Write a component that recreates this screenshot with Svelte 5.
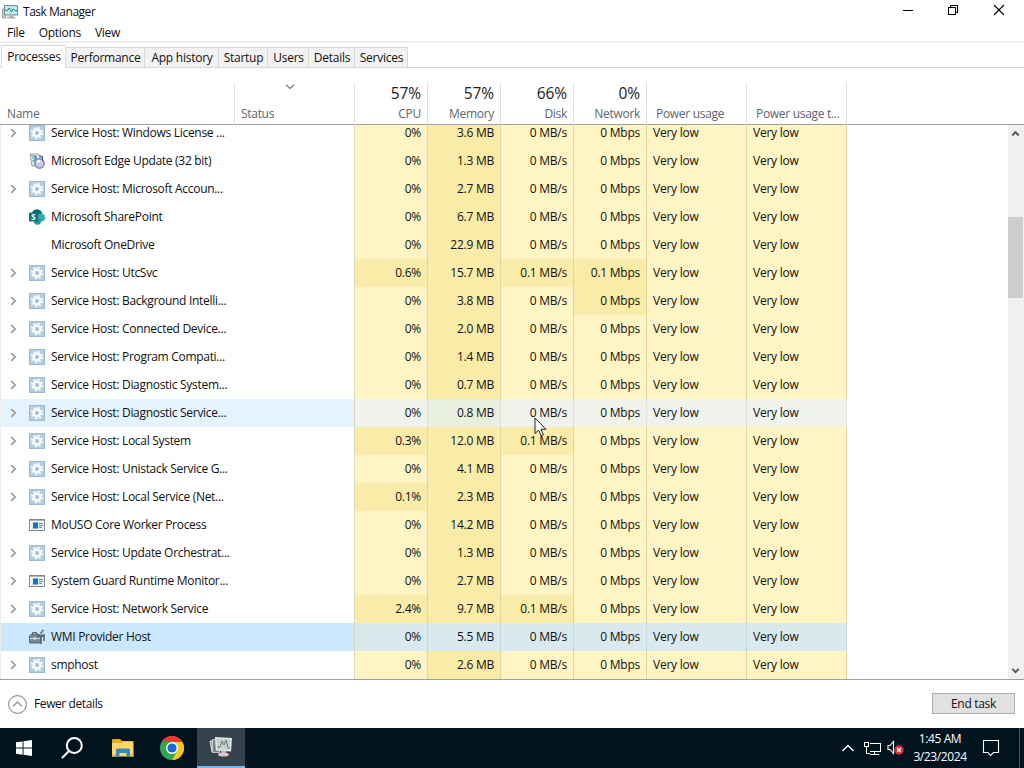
<script lang="ts">
	type Process = {
		name: string;
		icon: string;
		expandable?: boolean;
		values: string[];
		heat?: number[];
		state?: string;
	};

	const menus = ['File', 'Options', 'View'];

	const tabs = [
		{ label: 'Processes', width: 65 },
		{ label: 'Performance', width: 79 },
		{ label: 'App history', width: 74 },
		{ label: 'Startup', width: 49 },
		{ label: 'Users', width: 41 },
		{ label: 'Details', width: 46 },
		{ label: 'Services', width: 53 }
	];

	const columns = [
		{ label: 'Name' },
		{ label: 'Status', sorted: true },
		{ label: 'CPU', total: '57%' },
		{ label: 'Memory', total: '57%' },
		{ label: 'Disk', total: '66%' },
		{ label: 'Network', total: '0%' },
		{ label: 'Power usage' },
		{ label: 'Power usage t...' }
	];

	// values are CPU, memory, disk, network; heat lists the columns drawn darker
	const processes: Process[] = [
		{ name: 'Service Host: Windows License ...', icon: 'gear', expandable: true, values: ['0%', '3.6 MB', '0 MB/s', '0 Mbps'] },
		{ name: 'Microsoft Edge Update (32 bit)', icon: 'update', values: ['0%', '1.3 MB', '0 MB/s', '0 Mbps'] },
		{ name: 'Service Host: Microsoft Accoun...', icon: 'gear', expandable: true, values: ['0%', '2.7 MB', '0 MB/s', '0 Mbps'] },
		{ name: 'Microsoft SharePoint', icon: 'sharepoint', values: ['0%', '6.7 MB', '0 MB/s', '0 Mbps'] },
		{ name: 'Microsoft OneDrive', icon: 'none', values: ['0%', '22.9 MB', '0 MB/s', '0 Mbps'] },
		{ name: 'Service Host: UtcSvc', icon: 'gear', expandable: true, values: ['0.6%', '15.7 MB', '0.1 MB/s', '0.1 Mbps'], heat: [0, 2, 3] },
		{ name: 'Service Host: Background Intelli...', icon: 'gear', expandable: true, values: ['0%', '3.8 MB', '0 MB/s', '0 Mbps'], heat: [3] },
		{ name: 'Service Host: Connected Device...', icon: 'gear', expandable: true, values: ['0%', '2.0 MB', '0 MB/s', '0 Mbps'] },
		{ name: 'Service Host: Program Compati...', icon: 'gear', expandable: true, values: ['0%', '1.4 MB', '0 MB/s', '0 Mbps'] },
		{ name: 'Service Host: Diagnostic System...', icon: 'gear', expandable: true, values: ['0%', '0.7 MB', '0 MB/s', '0 Mbps'] },
		{ name: 'Service Host: Diagnostic Service...', icon: 'gear', expandable: true, values: ['0%', '0.8 MB', '0 MB/s', '0 Mbps'], state: 'hovered' },
		{ name: 'Service Host: Local System', icon: 'gear', expandable: true, values: ['0.3%', '12.0 MB', '0.1 MB/s', '0 Mbps'], heat: [0, 2] },
		{ name: 'Service Host: Unistack Service G...', icon: 'gear', expandable: true, values: ['0%', '4.1 MB', '0 MB/s', '0 Mbps'] },
		{ name: 'Service Host: Local Service (Net...', icon: 'gear', expandable: true, values: ['0.1%', '2.3 MB', '0 MB/s', '0 Mbps'], heat: [0] },
		{ name: 'MoUSO Core Worker Process', icon: 'window', values: ['0%', '14.2 MB', '0 MB/s', '0 Mbps'] },
		{ name: 'Service Host: Update Orchestrat...', icon: 'gear', expandable: true, values: ['0%', '1.3 MB', '0 MB/s', '0 Mbps'] },
		{ name: 'System Guard Runtime Monitor...', icon: 'window', expandable: true, values: ['0%', '2.7 MB', '0 MB/s', '0 Mbps'] },
		{ name: 'Service Host: Network Service', icon: 'gear', expandable: true, values: ['2.4%', '9.7 MB', '0.1 MB/s', '0 Mbps'], heat: [0, 2] },
		{ name: 'WMI Provider Host', icon: 'wmi', values: ['0%', '5.5 MB', '0 MB/s', '0 Mbps'], state: 'selected' },
		{ name: 'smphost', icon: 'gear', expandable: true, values: ['0%', '2.6 MB', '0 MB/s', '0 Mbps'] }
	];

	let selected = $state(0);
</script>

<div class="screen">
	<div class="window">
		<header class="titlebar">
			<svg class="app-icon" width="16" height="16" viewBox="0 0 16 16">
				<path d="M0.5 5h3v9h-3z" fill="#c9cdcd" stroke="#8d9696" stroke-width=".8" />
				<path d="M2.500 1.500h13v9.500h-13z" fill="#b8ecec" stroke="#7d8a8c" />
				<path d="M3.500 6.500h2l1.700-2.500 2.300 4 2-3 1.500 1.500h2" fill="none" stroke="#26797d" />
				<path d="M7 11.500h4.500v1.500h2v1.500h-8.500v-1.500h2z" fill="#a9b0b1" />
			</svg>
			<span class="title">Task Manager</span>
			<div class="controls">
				<svg width="46" height="22" viewBox="0 0 46 22" shape-rendering="crispEdges">
					<path d="M18 10.500h10" stroke="#000" />
				</svg>
				<svg width="46" height="22" viewBox="0 0 46 22" shape-rendering="crispEdges">
					<path d="M17.500 7.500h7v7h-7zM19.500 7.500v-2h7v7h-2" fill="none" stroke="#000" />
				</svg>
				<svg width="46" height="22" viewBox="0 0 46 22">
					<path d="M17 5l10 10M27 5l-10 10" stroke="#000" stroke-width="1.100" />
				</svg>
			</div>
		</header>

		<nav class="menubar">
			{#each menus as menu}
				<span>{menu}</span>
			{/each}
		</nav>

		<div class="tabs">
			{#each tabs as tab, i}
				<button class="tab" class:active={selected === i} style="width: {tab.width}px" onclick={() => (selected = i)}>
					{tab.label}
				</button>
			{/each}
		</div>

		<div class="columns head">
			{#each columns as column, i}
				<div class="column" class:numeric={column.total} class:power={i > 5}>
					{#if column.sorted}
						<svg class="sort" width="10" height="6" viewBox="0 0 10 6">
							<path d="M1 0.800l4 3.700 4-3.700" fill="none" stroke="#777" stroke-width="1.200" />
						</svg>
					{/if}
					{#if column.total}
						<span class="total">{column.total}</span>
					{/if}
					<span class="label">{column.label}</span>
				</div>
			{/each}
		</div>

		<div class="list">
			<div class="rows">
				{#each processes as process}
					<div class="columns row {process.state ?? ''}">
						<div class="name">
							<span class="expander">
								{#if process.expandable}
									<svg width="7" height="10" viewBox="0 0 7 10">
										<path d="M1.200 1.200l4 3.800-4 3.800" fill="none" stroke="#9b9b9b" stroke-width="1.700" />
									</svg>
								{/if}
							</span>
							<svg class="icon" width="16" height="16" viewBox="0 0 16 16">
								{#if process.icon === 'gear'}
									<rect width="16" height="16" fill="#9dbbd3" />
									<rect x="1" y="1" width="14" height="14" fill="#b3cee4" />
									<circle cx="8" cy="8" r="5" fill="none" stroke="#fafdff" stroke-width="2.400" stroke-dasharray="1.960 1.967" />
									<circle cx="8" cy="8" r="3.300" fill="none" stroke="#fafdff" stroke-width="2.500" />
									<circle cx="8" cy="8" r="2" fill="#a9c6de" />
								{:else if process.icon === 'update'}
									<path d="M1 1h8l2 2v10H3z" fill="#e7edf2" stroke="#7f8d98" stroke-width=".8" />
									<path d="M2 3h5M3 5h4M3 8h3" stroke="#5d8eb0" />
									<path d="M5 2l3 1v4l-3 2z" fill="#6aa4c4" />
									<circle cx="10.500" cy="10.500" r="4.800" fill="#c3cbe0" stroke="#52608c" />
									<path d="M7 9a4 4 0 0 1 5-2l-2 3z" fill="#f6f8fc" />
									<path d="M10 2.500l3 1.500 1 4M12 3l2 2" fill="none" stroke="#455577" stroke-width="1.100" />
								{:else if process.icon === 'sharepoint'}
									<circle cx="8" cy="5.500" r="5.300" fill="#036c70" />
									<circle cx="12" cy="8.500" r="4" fill="#37a9a8" />
									<circle cx="8.500" cy="12.300" r="3.500" fill="#1a9ba1" />
									<rect y="3.500" width="9" height="9" rx="1" fill="#03787c" />
									<text x="2" y="11.200" class="sp-letter">S</text>
								{:else if process.icon === 'window'}
									<rect x=".5" y="2.500" width="15" height="11" fill="#fff" stroke="#848484" />
									<path d="M1 3.500h14" stroke="#b5b5b5" />
									<rect x="2" y="5" width="12" height="7.500" fill="#e6edf1" />
									<rect x="4" y="5.500" width="5" height="6" fill="#0878cb" />
									<path d="M10 6.500h4M10 8.500h4M10 10.500h3" stroke="#7c8990" />
								{:else if process.icon === 'wmi'}
									<path d="M0.500 7l2-2h7l2 2v7h-11z" fill="#788890" stroke="#4b5961" stroke-width=".8" />
									<path d="M3.500 5V3.500h4V5" fill="none" stroke="#53636b" />
									<path d="M1 9.500h10" stroke="#cad8df" />
									<rect x="4.500" y="8.500" width="2.500" height="2" fill="#dce7ec" />
									<path d="M8 5.500h7v2.500H8z" fill="#5b6d76" />
									<path d="M12 7v8M14.500 1l-3 3.500M15 5v7" stroke="#52636c" stroke-width="1.500" />
									<path d="M12.500 1.500l2 2" stroke="#9dacb4" />
								{/if}
							</svg>
							<span class="text">{process.name}</span>
						</div>
						<div class="status"></div>
						{#each process.values as value, i}
							<div class="cell" class:memory={i === 1} class:hot={process.heat?.includes(i)}>{value}</div>
						{/each}
						<div class="cell usage">Very low</div>
						<div class="cell usage">Very low</div>
					</div>
				{/each}
			</div>
			<div class="scrollbar">
				<svg width="16" height="17" viewBox="0 0 16 17">
					<path d="M4.300 10.500l3.200-3.400 3.200 3.400" fill="none" stroke="#555" stroke-width="1.900" />
				</svg>
				<div class="track"><div class="thumb"></div></div>
				<svg width="16" height="17" viewBox="0 0 16 17">
					<path d="M4.300 6.800l3.200 3.400 3.200-3.400" fill="none" stroke="#555" stroke-width="1.900" />
				</svg>
			</div>
		</div>

		<footer class="footer">
			<svg width="19" height="19" viewBox="0 0 19 19">
				<circle cx="9.500" cy="9.500" r="8.900" fill="none" stroke="#777" />
				<path d="M5 11.300l4.500-4.300 4.500 4.300" fill="none" stroke="#808080" stroke-width="1.100" />
			</svg>
			<span class="fewer">Fewer details</span>
			<button class="end-task">End task</button>
		</footer>
	</div>

	<div class="taskbar">
		<div class="task">
			<svg width="16" height="16" viewBox="0 0 16 16">
				<path d="M0 2.300l6.600-.9v6.200H0zM7.500 1.200L16 0v7.600H7.500zM0 8.500h6.600v6.200L0 13.800zM7.500 8.500H16V16l-8.500-1.200z" fill="#fff" />
			</svg>
		</div>
		<div class="task">
			<svg width="24" height="24" viewBox="0 0 24 24">
				<circle cx="14.300" cy="9.500" r="7.500" fill="none" stroke="#fff" stroke-width="2" />
				<path d="M9 15l-7 7" stroke="#fff" stroke-width="2.200" />
			</svg>
		</div>
		<div class="task explorer">
			<svg width="24" height="20" viewBox="0 0 24 20">
				<path d="M1 2q0-1 1-1h7l2 2h10q1 0 1 1v14H1z" fill="#e9a91f" />
				<path d="M1 5h10l1-1.500h10.500V18.500H1z" fill="#ffd768" />
				<path d="M5 19v-7q0-1.500 1.500-1.500h11q1.500 0 1.500 1.500v7h-3.500v-4h-7v4z" fill="#358bbc" />
				<path d="M1 17.500h4M19 17.500h3.500" stroke="#eeb93b" stroke-width="2" />
			</svg>
		</div>
		<div class="task chrome">
			<svg width="24" height="24" viewBox="0 0 24 24">
				<circle cx="12" cy="12" r="12" fill="#34a64c" />
				<path d="M12 12L1.600 6a12 12 0 0 1 20.800 0z" fill="#e13f30" />
				<path d="M12 6h10.400A12 12 0 0 1 12 24l5.200-9z" fill="#fbc51b" />
				<path d="M1.600 6l5.200 9L12 6z" fill="#34a64c" />
				<circle cx="12" cy="12" r="6" fill="#fff" />
				<circle cx="12" cy="12" r="4.600" fill="#1b69d9" />
			</svg>
		</div>
		<div class="task running">
			<svg width="24" height="22" viewBox="0 0 24 22">
				<path d="M1 5h5v11H3z" fill="#a6acac" stroke="#d9dddd" />
				<path d="M3.500 3.500h7v13h-7z" fill="#7c8787" stroke="#c3c9c9" />
				<path d="M6 1l17 1-1 13.500-15-1z" fill="#e5ebea" />
				<path d="M7.500 2.500l14 .8-.8 10.700-12.400-.8z" fill="#c3d2cf" />
				<path d="M8 11h3l2-6 2 4 2-5 2 8h2" fill="none" stroke="#64807b" />
				<path d="M12 15h5v2h-5z" fill="#aeb6b7" />
				<ellipse cx="14.500" cy="18.500" rx="5.500" ry="2" fill="#dfc4cb" />
			</svg>
		</div>

		<div class="tray">
			<svg width="14" height="10" viewBox="0 0 14 10">
				<path d="M1.500 8l5.500-5.500L12.500 8" fill="none" stroke="#fff" stroke-width="1.300" />
			</svg>
			<svg class="network" width="17" height="15" viewBox="0 0 17 15" shape-rendering="crispEdges">
				<path d="M5.500 2.500h11v8h-11M10.500 10.500v3M6 13.500h9" fill="none" stroke="#fff" />
				<path d="M.5 1.500h4v4h-4zM2.500 5.500v7h3" fill="none" stroke="#fff" />
			</svg>
			<svg class="volume" width="17" height="16" viewBox="0 0 17 16">
				<path d="M1 5.500h2l3.500-4v12l-3.500-4H1z" fill="none" stroke="#fff" stroke-width="1.100" />
				<circle cx="12" cy="10" r="4.700" fill="#d32f35" />
				<path d="M10 8l4 4M14 8l-4 4" stroke="#fff" stroke-width="1.200" />
			</svg>
			<div class="clock">
				<span>1:45 AM</span>
				<span>3/23/2024</span>
			</div>
			<svg class="notice" width="18" height="18" viewBox="0 0 18 18">
				<path d="M1.500 1.500h15v12h-5L8.500 16.500l-2.500-3H1.500z" fill="none" stroke="#fff" stroke-width="1.100" />
			</svg>
			<div class="show-desktop"></div>
		</div>
	</div>

	<svg class="cursor" width="13" height="20" viewBox="0 0 13 20">
		<path d="M1 1v15.500l3.600-3.400 2.500 5.700 2.300-1-2.500-5.500h5z" fill="#fff" stroke="#222" />
	</svg>
</div>

<style>
	:global(body) {
		overflow: hidden;
	}

	.screen {
		position: relative;
		display: flex;
		flex-direction: column;
		width: 1024px;
		height: 768px;
		box-sizing: border-box;
		font-family: 'Open Sans', 'Noto Sans', sans-serif;
		font-size: 12px;
		letter-spacing: -0.3px;
		color: #111;
		cursor: default;
	}

	.window {
		display: flex;
		flex-direction: column;
		height: 728px;
		background: #fff;
	}

	.titlebar {
		display: flex;
		align-items: center;
		height: 24px;
		padding-left: 2px;
	}

	.title {
		padding-bottom: 2px;
		letter-spacing: -0.48px;
	}

	.app-icon {
		margin-right: 5px;
	}

	.controls {
		display: flex;
		margin-left: auto;
		margin-right: 1px;
		padding-bottom: 2px;
	}

	.menubar {
		display: flex;
		height: 17px;
		padding-left: 7px;
		gap: 14px;
		line-height: 17px;
		border-bottom: 2px solid #f0f0f0;
	}

	.tabs {
		display: flex;
		align-items: flex-end;
		height: 25px;
		padding-left: 1px;
		box-sizing: border-box;
		border-bottom: 1px solid #d9d9d9;
	}

	.tab {
		box-sizing: border-box;
		height: 20px;
		padding: 0 0 0 1px;
		border: 1px solid #d9d9d9;
		border-left: none;
		border-bottom: none;
		background: #f2f2f2;
		color: inherit;
		font: inherit;
		letter-spacing: -0.25px;
		line-height: 19px;
		white-space: nowrap;
	}

	.tab.active {
		height: 23px;
		margin-bottom: -1px;
		padding-bottom: 2px;
		border-left: 1px solid #d9d9d9;
		background: #fff;
	}

	.columns {
		display: grid;
		grid-template-columns: 235px 120px repeat(4, 73px) repeat(2, 100px);
	}

	.head {
		height: 56px;
		padding-top: 15px;
		box-sizing: border-box;
		color: #5c6570;
	}

	.column {
		position: relative;
		display: flex;
		flex-direction: column;
		justify-content: flex-end;
		padding: 0 6px 3px;
		border-right: 1px solid #dedede;
	}

	.column:first-child {
		padding-left: 7px;
	}

	.column.numeric {
		align-items: flex-end;
	}

	.column.power {
		padding-left: 9px;
	}

	.total {
		margin-bottom: 3px;
		font-size: 15.5px;
		line-height: 20px;
		letter-spacing: -0.1px;
		color: #222;
	}

	.label {
		line-height: 16px;
		white-space: nowrap;
	}

	.sort {
		position: absolute;
		top: 1px;
		left: 50px;
	}

	.list {
		display: flex;
		justify-content: space-between;
		height: 554px;
		border-top: 1px solid #a0a0a0;
		border-bottom: 1px solid #a0a0a0;
		overflow: hidden;
	}

	.rows {
		margin-top: -6px;
	}

	.row {
		height: 28px;
		line-height: 28px;
	}

	.name {
		display: flex;
		align-items: center;
		padding-left: 9px;
		border-left: 1px solid #ececec;
		white-space: nowrap;
	}

	.expander {
		display: flex;
		width: 19px;
	}

	.icon {
		flex: none;
		margin-right: 6px;
	}

	.sp-letter {
		font: bold 8.500px 'Open Sans', sans-serif;
		fill: #fff;
	}

	.status {
		border-right: 1px solid #e0d9b4;
	}

	.cell {
		padding-right: 6px;
		border-right: 1px solid #e0d5a0;
		background: #fff4c4;
		letter-spacing: -0.25px;
		text-align: right;
		white-space: nowrap;
	}

	.cell.hot {
		background: #f9eca8;
	}

	.cell.memory {
		background: #f9eca8;
	}

	.cell.usage {
		padding-left: 6px;
		text-align: left;
	}

	.hovered .name,
	.hovered .status {
		background: #e5f3ff;
	}

	.hovered .cell {
		border-color: #dfe3dc;
		background: #eff3ec;
	}

	.hovered .cell.memory {
		background: #e9efdf;
	}

	.selected .name,
	.selected .status {
		background: #cce8ff;
	}

	.selected .cell {
		border-color: #c6d9dc;
		background: #d9e9ed;
	}

	.scrollbar {
		display: flex;
		flex-direction: column;
		width: 16px;
		background: #f0f0f0;
	}

	.track {
		flex: 1;
		padding-top: 75px;
	}

	.thumb {
		width: 15px;
		height: 81px;
		background: #cdcdcd;
	}

	.footer {
		display: flex;
		align-items: center;
		height: 48px;
		padding: 0 9px 0 8px;
	}

	.fewer {
		margin-left: 7px;
		padding-bottom: 2px;
		letter-spacing: -0.4px;
	}

	.end-task {
		width: 83px;
		height: 21px;
		margin-left: auto;
		margin-bottom: 1px;
		padding: 0;
		border: 1px solid #adadad;
		background: #e1e1e1;
		color: inherit;
		font: inherit;
		letter-spacing: inherit;
		line-height: 19px;
	}

	.taskbar {
		display: flex;
		height: 40px;
		background: #01131f;
	}

	.task {
		display: flex;
		align-items: center;
		justify-content: center;
		width: 48px;
	}

	.explorer {
		margin-left: 3px;
	}

	.chrome {
		margin: 0 1px;
	}

	.running {
		box-sizing: border-box;
		border-bottom: 2px solid #76b9ed;
		background: #35424b;
	}

	.tray {
		display: flex;
		align-items: center;
		margin-left: auto;
		color: #fff;
	}

	.network {
		margin-left: 9px;
	}

	.volume {
		margin-left: 6px;
	}

	.clock {
		display: flex;
		flex-direction: column;
		align-items: center;
		width: 54px;
		margin-left: 9px;
		line-height: 18px;
		letter-spacing: -0.4px;
	}

	.notice {
		margin-left: 15px;
	}

	.show-desktop {
		height: 40px;
		width: 4px;
		margin-left: 19px;
		border-left: 1px solid #4a5662;
	}

	.cursor {
		position: absolute;
		top: 417px;
		left: 534px;
	}
</style>
